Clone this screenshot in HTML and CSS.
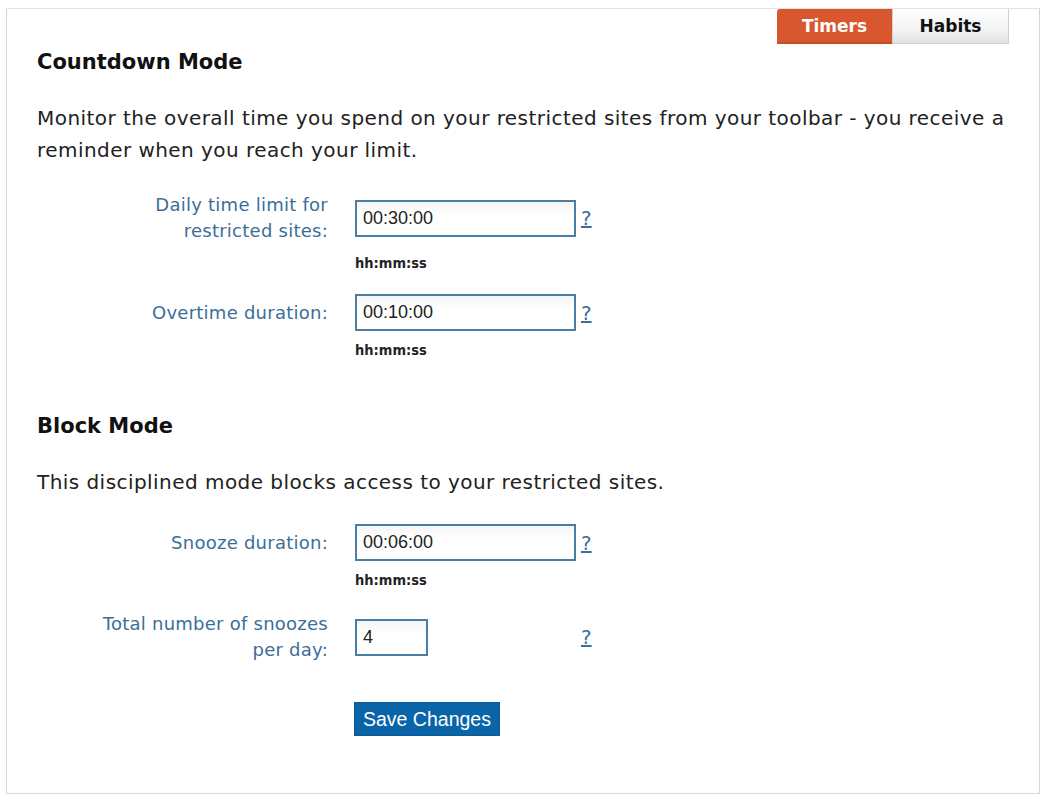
FILE: index.html
```html
<!DOCTYPE html>
<html>
<head>
<meta charset="utf-8">
<link rel="stylesheet" href="styles.css">
</head>
<body>
<div class="panel">
  <div class="tabs">
    <div class="tab tab-active">Timers</div>
    <div class="tab tab-plain">Habits</div>
  </div>

  <h2 class="section-title first">Countdown Mode</h2>
  <p class="intro">Monitor the overall time you spend on your restricted sites from your toolbar - you receive a reminder when you reach your limit.</p>

  <div class="field">
    <div class="field-row">
      <label class="label">Daily time limit for<br>restricted sites:</label>
      <input class="input wide" type="text" value="00:30:00">
      <a class="help" href="#">?</a>
    </div>
    <div class="hint">hh:mm:ss</div>
  </div>

  <div class="field">
    <div class="field-row">
      <label class="label">Overtime duration:</label>
      <input class="input wide" type="text" value="00:10:00">
      <a class="help" href="#">?</a>
    </div>
    <div class="hint">hh:mm:ss</div>
  </div>

  <h2 class="section-title second">Block Mode</h2>
  <p class="intro">This disciplined mode blocks access to your restricted sites.</p>

  <div class="field">
    <div class="field-row">
      <label class="label">Snooze duration:</label>
      <input class="input wide" type="text" value="00:06:00">
      <a class="help" href="#">?</a>
    </div>
    <div class="hint">hh:mm:ss</div>
  </div>

  <div class="field">
    <div class="field-row">
      <label class="label">Total number of snoozes<br>per day:</label>
      <div class="narrow-wrap"><input class="input narrow" type="text" value="4"></div>
      <a class="help" href="#">?</a>
    </div>
  </div>

  <div class="actions">
    <button class="save" type="button">Save Changes</button>
  </div>
</div>
</body>
</html>
```

FILE: styles.css
```css
html, body {
  margin: 0;
  padding: 0;
  background: #ffffff;
}

body {
  font-family: "DejaVu Sans", sans-serif;
  color: #222222;
}

.panel {
  margin: 8px 7px 0 6px;
  height: 786px;
  box-sizing: border-box;
  border: 1px solid #d6d6d6;
  border-top-color: #e2e2e2;
  padding: 0 30px;
}

.tabs {
  display: flex;
  justify-content: flex-end;
  height: 35px;
}

.tab {
  box-sizing: border-box;
  height: 35px;
  display: flex;
  align-items: center;
  justify-content: center;
  font-weight: bold;
  font-size: 17px;
}

.tab-active {
  width: 115px;
  background: #d9572f;
  color: #ffffff;
  border-radius: 3px 0 0 0;
  border-bottom: 2px solid #c54d27;
}

.tab-plain {
  width: 117px;
  background: linear-gradient(#ffffff, #f3f3f3 60%, #e2e2e2);
  color: #111111;
  border: 1px solid #d0d0d0;
  border-top: none;
}

.section-title {
  margin: 0;
  font-size: 21px;
  font-weight: bold;
  line-height: 30px;
  color: #111111;
}

.section-title.first {
  margin-top: 3px;
}

.section-title.second {
  margin-top: 52px;
}

.intro {
  margin: 25px 0 0 0;
  font-size: 20px;
  letter-spacing: 0.45px;
  line-height: 32px;
  color: #222222;
}

.field {
  margin-top: 26px;
}

.field + .field {
  margin-top: 22px;
}

.field-row {
  display: flex;
  align-items: center;
}

.label {
  width: 291px;
  flex: none;
  text-align: right;
  font-size: 18px;
  letter-spacing: 0.25px;
  line-height: 26px;
  color: #3b6e98;
  margin-right: 27px;
}

.input {
  box-sizing: border-box;
  height: 37px;
  border: 2px solid #4a7ea2;
  background: linear-gradient(#f5f5f5, #ffffff 40%);
  font-family: "Liberation Sans", Arial, sans-serif;
  font-size: 18px;
  color: #222222;
  padding: 0 6px;
  outline: none;
}

.input.wide {
  width: 221px;
}

.narrow-wrap {
  width: 221px;
  flex: none;
}

.input.narrow {
  width: 73px;
}

.help {
  margin-left: 5px;
  font-size: 20px;
  color: #3b6e98;
  text-decoration: underline;
}

.hint {
  margin: 10px 0 0 318px;
  font-family: "DejaVu Sans Condensed", "DejaVu Sans", sans-serif;
  font-size: 14.5px;
  font-weight: bold;
  line-height: 18px;
  color: #222222;
}

.actions {
  margin: 39px 0 0 317px;
}

.save {
  height: 34px;
  padding: 0 8px;
  border: 1px solid #0b5a97;
  background: #0a64a8;
  color: #ffffff;
  font-family: "Liberation Sans", Arial, sans-serif;
  font-size: 19.5px;
  cursor: pointer;
}
```
